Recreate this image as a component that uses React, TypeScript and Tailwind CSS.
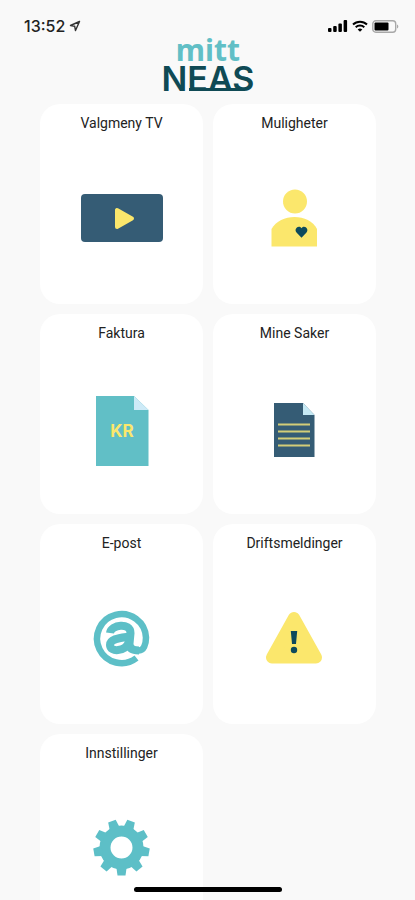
import type { ReactNode } from 'react';

type MenuItem = {
  label: string;
  href: string;
  icon: ReactNode;
};

const GEAR_TEETH = [0, 40, 80, 120, 160, 200, 240, 280, 320];

// Every menu icon shares the same 85x80 canvas
function IconCanvas({ children }: { children: ReactNode }): React.JSX.Element {
  return (
    <svg viewBox="0 0 85 80" width={85} height={80} aria-hidden="true">
      {children}
    </svg>
  );
}

function TvIcon(): React.JSX.Element {
  return (
    <IconCanvas>
      <rect x="2" y="16" width="82" height="48" rx="4" fill="#355c75" />
      <path
        d="M38 32v17l15-8.5z"
        fill="#fbe76c"
        stroke="#fbe76c"
        strokeWidth="4"
        strokeLinejoin="round"
      />
    </IconCanvas>
  );
}

function PersonIcon(): React.JSX.Element {
  return (
    <IconCanvas>
      <circle cx="43" cy="23.5" r="12" fill="#fbe76c" />
      <path d="M19.500 68.500V51C24 43 33 39 42.500 39S61 43 65 51v17.500z" fill="#fbe76c" />
      <path
        d="M49.500 59.800l-5-5.200c-3-3.500 2-8.200 5-4.400 3-3.800 8 .9 5 4.400z"
        fill="#0d4a5c"
      />
    </IconCanvas>
  );
}

function InvoiceIcon(): React.JSX.Element {
  return (
    <IconCanvas>
      <path d="M17 8h38l14.500 14v56H17z" fill="#61bfc6" />
      <path d="M55 8l14.500 14H55z" fill="#cdeaf7" />
      <text
        x="43"
        y="49"
        textAnchor="middle"
        className="fill-[#fbe76c] font-['Inter',sans-serif] text-[17px] font-bold"
      >
        KR
      </text>
    </IconCanvas>
  );
}

function CaseIcon(): React.JSX.Element {
  return (
    <IconCanvas>
      <path d="M22 15h29l11.500 12v42H22z" fill="#355c75" />
      <path d="M51 15l11.500 12H51z" fill="#c5e9f4" />
      <path d="M26 36.500h32M26 43.500h32M26 50.500h32M26 57.500h32" stroke="#d3cd78" strokeWidth="2" />
    </IconCanvas>
  );
}

function MailIcon(): React.JSX.Element {
  return (
    <IconCanvas>
      <g fill="none" stroke="#5dbfc7">
        <path d="M57.500 60A24.500 24.500 0 1 1 67 39.500C67 47 64.500 52.500 60 52.500" strokeWidth="6.500" />
        <path d="M31 35C32 26.500 51.500 24 51.500 35L50.500 46C50.500 50.500 54 52.500 60 52.500" strokeWidth="8" />
        <path d="M51 38.500C41 40 31 40.500 31 47C31 54.500 46 54 50 44" strokeWidth="8" />
      </g>
    </IconCanvas>
  );
}

function WarningIcon(): React.JSX.Element {
  return (
    <IconCanvas>
      <path
        d="M42 20L20 59.500h44z"
        fill="#fbe76c"
        stroke="#fbe76c"
        strokeWidth="12"
        strokeLinejoin="round"
      />
      <path d="M38.800 33h6.400l-1.200 13h-4z" fill="#0d4a5c" />
      <circle cx="42" cy="52" r="3.200" fill="#0d4a5c" />
    </IconCanvas>
  );
}

function GearIcon(): React.JSX.Element {
  return (
    <IconCanvas>
      <circle cx="42.500" cy="39.500" r="16.500" fill="none" stroke="#5dbfc7" strokeWidth="11" />
      {GEAR_TEETH.map((angle) => (
        <path
          key={angle}
          d="M37.300 59h10.400l-1.200 8.500h-8z"
          fill="#5dbfc7"
          transform={`rotate(${angle} 42.500 39.500)`}
        />
      ))}
    </IconCanvas>
  );
}

const MENU: MenuItem[] = [
  { label: 'Valgmeny TV', href: '#tv', icon: <TvIcon /> },
  { label: 'Muligheter', href: '#muligheter', icon: <PersonIcon /> },
  { label: 'Faktura', href: '#faktura', icon: <InvoiceIcon /> },
  { label: 'Mine Saker', href: '#saker', icon: <CaseIcon /> },
  { label: 'E-post', href: '#epost', icon: <MailIcon /> },
  { label: 'Driftsmeldinger', href: '#drift', icon: <WarningIcon /> },
  { label: 'Innstillinger', href: '#innstillinger', icon: <GearIcon /> },
];

function StatusBar(): React.JSX.Element {
  return (
    <div className="flex items-center justify-between pt-4 pr-4 pl-6 text-black">
      <div className="flex items-center gap-1">
        <span className="font-['Inter',sans-serif] text-base leading-5 font-medium text-[#222]">13:52</span>
        <svg viewBox="0 0 12 12" width={12} height={12} aria-hidden="true">
          <path
            d="M10.500 1.500L1.500 5.500l4.200.8.800 4.200z"
            fill="none"
            stroke="#333"
            strokeWidth="1.400"
            strokeLinejoin="round"
          />
        </svg>
      </div>
      <div className="flex items-center gap-1">
        <svg viewBox="0 0 20 12" width={20} height={12} aria-hidden="true">
          <rect x="0" y="8" width="3.500" height="4" rx="1" />
          <rect x="5.200" y="6" width="3.500" height="6" rx="1" />
          <rect x="10.400" y="3.500" width="3.500" height="8.500" rx="1" />
          <rect x="15.600" y="0" width="3.500" height="12" rx="1" />
        </svg>
        <svg viewBox="0 0 16 12" width={16} height={12} aria-hidden="true">
          <path d="M1 4.500a10 10 0 0 1 14 0M3.700 7.300a6.200 6.200 0 0 1 8.600 0" fill="none" stroke="#000" strokeWidth="2" />
          <path d="M8 11.800L5.700 9.500a3.300 3.300 0 0 1 4.600 0z" />
        </svg>
        <svg viewBox="0 0 27 13" width={27} height={13} aria-hidden="true">
          <rect x=".8" y=".8" width="22.900" height="11.400" rx="3" fill="none" stroke="#a8a8a8" strokeWidth="1.400" />
          <rect x="2.500" y="2.500" width="14" height="8" rx="1" />
          <path d="M25 4.500c1.800.6 1.800 3.400 0 4z" fill="#a8a8a8" />
        </svg>
      </div>
    </div>
  );
}

function Logo(): React.JSX.Element {
  return (
    <svg viewBox="0 0 100 60" width={100} height={60} className="overflow-visible" role="img" aria-label="mitt NEAS">
      <text
        x="50"
        y="25"
        textAnchor="middle"
        className="fill-[#61bfc6] font-['Noto_Sans',sans-serif] text-[30px] font-bold"
      >
        mitt
      </text>
      <text
        x="50"
        y="55"
        textAnchor="middle"
        className="fill-[#0f4a55] font-['Inter',sans-serif] text-[34px] font-semibold"
      >
        NEAS
      </text>
      {/* base line that ties E, A and S together */}
      <rect x="31" y="52" width="56" height="3" fill="#0f4a55" />
    </svg>
  );
}

function MenuCard({ item }: { item: MenuItem }): React.JSX.Element {
  return (
    <a href={item.href} className="flex h-[200px] flex-col items-center rounded-[20px] bg-white pt-[9px]">
      <span className="font-['Roboto',sans-serif] text-sm leading-5 text-[#222]">{item.label}</span>
      <span className="flex flex-1 items-center pb-px">{item.icon}</span>
    </a>
  );
}

export default function App(): React.JSX.Element {
  return (
    <div className="flex h-dvh flex-col bg-[#f9f9f9]">
      <header>
        <StatusBar />
        <h1 className="flex justify-center pb-2">
          <Logo />
        </h1>
      </header>

      <main className="flex-1 overflow-y-auto pr-[39px] pl-10 [scrollbar-width:none]">
        <nav aria-label="Meny" className="grid grid-cols-2 gap-[10px]">
          {MENU.map((item) => (
            <MenuCard key={item.label} item={item} />
          ))}
        </nav>
      </main>

      {/* Home indicator */}
      <div className="pointer-events-none fixed inset-x-0 bottom-2 flex justify-center">
        <div className="h-[5px] w-[148px] rounded-full bg-black" />
      </div>
    </div>
  );
}
